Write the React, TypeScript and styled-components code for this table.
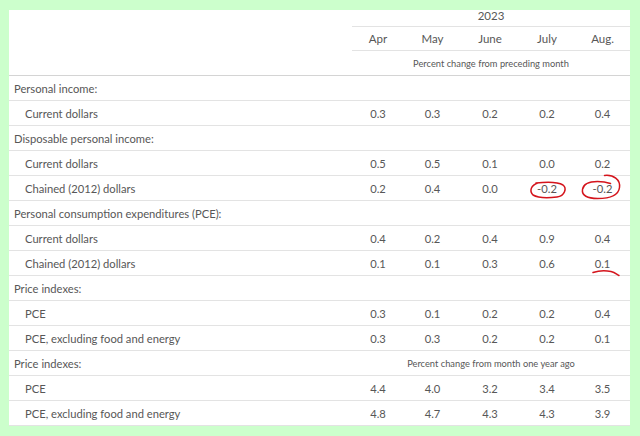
import * as React from "react";
import styled, { createGlobalStyle } from "styled-components";

const GlobalStyle = createGlobalStyle`
  html, body {
    margin: 0;
    padding: 0;
    background: #ccffcc;
  }
  body {
    font-family: Lato, "Open Sans", sans-serif;
    color: #575757;
  }
`;

type MarkType = "circle" | "circleTail" | "underline";

type Row =
  | { kind: "group"; label: string }
  | { kind: "item"; label: string; values: string[]; mark?: Record<number, MarkType> }
  | { kind: "note"; label: string; note: string };

const rows: Row[] = [
  { kind: "group", label: "Personal income:" },
  { kind: "item", label: "Current dollars", values: ["0.3", "0.3", "0.2", "0.2", "0.4"] },
  { kind: "group", label: "Disposable personal income:" },
  { kind: "item", label: "Current dollars", values: ["0.5", "0.5", "0.1", "0.0", "0.2"] },
  {
    kind: "item",
    label: "Chained (2012) dollars",
    values: ["0.2", "0.4", "0.0", "-0.2", "-0.2"],
    mark: { 3: "circle", 4: "circleTail" },
  },
  { kind: "group", label: "Personal consumption expenditures (PCE):" },
  { kind: "item", label: "Current dollars", values: ["0.4", "0.2", "0.4", "0.9", "0.4"] },
  {
    kind: "item",
    label: "Chained (2012) dollars",
    values: ["0.1", "0.1", "0.3", "0.6", "0.1"],
    mark: { 4: "underline" },
  },
  { kind: "group", label: "Price indexes:" },
  { kind: "item", label: "PCE", values: ["0.3", "0.1", "0.2", "0.2", "0.4"] },
  { kind: "item", label: "PCE, excluding food and energy", values: ["0.3", "0.3", "0.2", "0.2", "0.1"] },
  { kind: "note", label: "Price indexes:", note: "Percent change from month one year ago" },
  { kind: "item", label: "PCE", values: ["4.4", "4.0", "3.2", "3.4", "3.5"] },
  { kind: "item", label: "PCE, excluding food and energy", values: ["4.8", "4.7", "4.3", "4.3", "3.9"] },
];

const months = ["Apr", "May", "June", "July", "Aug."];
const COLS = "343px 52px 57px 58px 56px 55px";

// hand-drawn red pen marks sitting over a value
function Mark({ type }: { type: MarkType }) {
  if (type === "underline") {
    return (
      <Ink $w={30} $h={11} $dx={3} $dy={10} viewBox="0 0 30 11">
        <path d="M2 5 C 8 3, 15 3, 20 4 C 24 5, 26 7, 28 8" />
      </Ink>
    );
  }
  if (type === "circleTail") {
    return (
      <Ink $w={41} $h={27} $dx={-2} $dy={-1} viewBox="0 0 41 27">
        <path d="M24 2 C 33 1, 40 6, 39 14 C 38 22, 28 25, 17 25 C 7 25, 1 22, 2 16 C 3 10, 9 8, 17 8 C 23 8, 27 9, 30 10" />
      </Ink>
    );
  }
  return (
    <Ink $w={38} $h={18} $dx={1} $dy={2} viewBox="0 0 38 18">
      <path d="M7 2 C 16 1, 29 1, 34 4 C 38 7, 36 15, 28 16 C 19 17, 9 17, 4 14 C 0 10, 2 4, 9 2" />
    </Ink>
  );
}

export default function App() {
  return (
    <>
      <GlobalStyle />
      <Frame>
        <Panel>
          <Header>
            <div />
            <HeaderRight>
              <Year>2023</Year>
              <Months>
                {months.map((m) => (
                  <Month key={m}>{m}</Month>
                ))}
              </Months>
              <UnitNote>Percent change from preceding month</UnitNote>
            </HeaderRight>
          </Header>
          {rows.map((r, i) => {
            if (r.kind === "group") {
              return (
                <BodyRow key={i}>
                  <Label>{r.label}</Label>
                </BodyRow>
              );
            }
            if (r.kind === "note") {
              return (
                <BodyRow key={i}>
                  <Label>{r.label}</Label>
                  <RowNote>{r.note}</RowNote>
                </BodyRow>
              );
            }
            return (
              <BodyRow key={i}>
                <Label $indent>{r.label}</Label>
                {r.values.map((v, j) => (
                  <Value key={j}>
                    <ValueText>
                      {v}
                      {r.mark && r.mark[j] ? <Mark type={r.mark[j]} /> : null}
                    </ValueText>
                  </Value>
                ))}
              </BodyRow>
            );
          })}
        </Panel>
      </Frame>
    </>
  );
}

const Frame = styled.div`
  width: 640px;
  height: 436px;
  padding: 10px 10px 10px 9px;
  box-sizing: border-box;
`;

const Panel = styled.div`
  width: 621px;
  height: 416px;
  background: #ffffff;
  overflow: hidden;
`;

const Header = styled.div`
  display: grid;
  grid-template-columns: 343px 278px;
  height: 66px;
  box-sizing: border-box;
  border-bottom: 1px solid #d4d4d4;
`;

const HeaderRight = styled.div`
  display: flex;
  flex-direction: column;
`;

const Year = styled.div`
  height: 17px;
  box-sizing: border-box;
  border-bottom: 1px solid #e3e3e3;
  font-size: 11.5px;
  line-height: 12px;
  text-align: center;
`;

const Months = styled.div`
  display: grid;
  grid-template-columns: 52px 57px 58px 56px 55px;
  height: 24px;
  box-sizing: border-box;
  border-bottom: 1px solid #e3e3e3;
`;

const Month = styled.div`
  display: flex;
  align-items: center;
  justify-content: center;
  font-size: 11.5px;
`;

const UnitNote = styled.div`
  flex: 1;
  display: flex;
  align-items: center;
  justify-content: center;
  font-size: 9.3px;
`;

const BodyRow = styled.div`
  display: grid;
  grid-template-columns: ${COLS};
  height: 25px;
  box-sizing: border-box;
  border-bottom: 1px solid #e3e3e3;
  align-items: center;
`;

const Label = styled.div<{ $indent?: boolean }>`
  padding-left: ${(p) => (p.$indent ? 16 : 5)}px;
  font-size: 11.2px;
  white-space: nowrap;
`;

const Value = styled.div`
  font-size: 11.2px;
  text-align: center;
`;

const ValueText = styled.span`
  position: relative;
  display: inline-block;
`;

const RowNote = styled.div`
  grid-column: 2 / span 5;
  font-size: 9.3px;
  text-align: center;
`;

const Ink = styled.svg<{ $w: number; $h: number; $dx: number; $dy: number }>`
  position: absolute;
  left: 50%;
  top: 50%;
  width: ${(p) => p.$w}px;
  height: ${(p) => p.$h}px;
  transform: translate(
    calc(-50% + ${(p) => p.$dx}px),
    calc(-50% + ${(p) => p.$dy}px)
  );
  pointer-events: none;
  overflow: visible;
  path {
    fill: none;
    stroke: #d4141c;
    stroke-width: 1.5;
    stroke-linecap: round;
  }
`;
